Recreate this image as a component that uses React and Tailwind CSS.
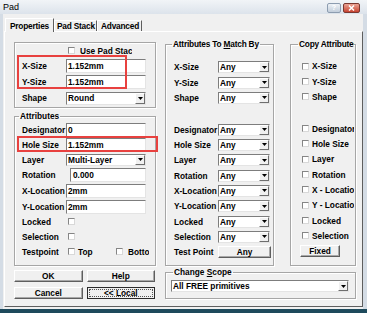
const group =
  "border border-[#a6a6a6] shadow-[inset_1px_1px_0_#ffffff,1px_1px_0_#ffffff]";

function Check({ className = "" }) {
  return (
    <span
      className={
        "block w-[7px] h-[7px] shrink-0 bg-white border border-[#858585] border-r-[#d8d8d8] border-b-[#d8d8d8] " +
        className
      }
    />
  );
}

function Field({ children, className = "" }) {
  return (
    <div
      className={
        "h-[14px] bg-white border border-[#7d7d7d] border-r-[#e4e4e4] border-b-[#e4e4e4] flex items-center pl-[1px] whitespace-nowrap " +
        className
      }
    >
      {children}
    </div>
  );
}

function Combo({ value, className = "" }) {
  return (
    <div
      className={
        "bg-white border border-[#7d7d7d] border-r-[#e4e4e4] border-b-[#e4e4e4] flex items-stretch " +
        className
      }
    >
      <span className="flex-1 flex items-center pl-[1px] overflow-hidden whitespace-nowrap">
        {value}
      </span>
      <span className="w-[10px] bg-[#f0f0f0] border border-white border-r-[#6e6e6e] border-b-[#6e6e6e] flex items-center justify-center">
        <svg width="5" height="3" viewBox="0 0 5 3">
          <path d="M0 0h5L2.5 3z" fill="#000" />
        </svg>
      </span>
    </div>
  );
}

function Btn({ children, className = "" }) {
  return (
    <div
      className={
        "h-[12px] bg-[#f0f0f0] border border-white border-r-[#5e5e5e] border-b-[#5e5e5e] shadow-[inset_-1px_-1px_0_#a8a8a8] flex items-center justify-center whitespace-nowrap " +
        className
      }
    >
      {children}
    </div>
  );
}

function Row({ label, h = "h-[15px]", children }) {
  return (
    <div className={"flex items-center " + h}>
      <span className="w-[44px] shrink-0 whitespace-nowrap">{label}</span>
      {children}
    </div>
  );
}

function CopyRow({ label, h = "h-[15px]" }) {
  return (
    <div className={"flex items-center " + h}>
      <Check />
      <span className="ml-[3px] w-[42px] overflow-hidden whitespace-nowrap">{label}</span>
    </div>
  );
}

export default function App() {
  return (
    <div className="w-[367px] h-[313px] overflow-hidden bg-[#d4dce5] border-b-[4px] border-b-[#1e4a5c] flex flex-col font-['Liberation_Sans',Arial,sans-serif] text-[8.3px] leading-[10px] text-black">
      {/* title bar */}
      <div className="h-[14px] shrink-0 flex items-center pl-[3px] pr-[7px] bg-gradient-to-b from-[#f1f4f7] to-[#dce3eb]">
        <span className="text-[9px] font-normal">Pad</span>
        <div className="ml-auto flex gap-[2px] self-start pt-[3px]">
          <div className="w-[14px] h-[10px] rounded-[2px] bg-gradient-to-b from-[#eef2f6] to-[#c2cedb] border border-[#8d9db0] flex items-center justify-center text-[7px] font-bold text-white">
            ?
          </div>
          <div className="w-[17px] h-[10px] rounded-[2px] bg-gradient-to-b from-[#eaa294] to-[#c6412f] border border-[#7a3830] flex items-center justify-center">
            <svg width="7" height="6" viewBox="0 0 7 6">
              <path d="M1 0.5l5 5M6 0.5l-5 5" stroke="#fff" strokeWidth="1.5" />
            </svg>
          </div>
        </div>
      </div>

      {/* client */}
      <div className="ml-[3px] w-[360px] flex-1 bg-[#f0f0f0] pt-[4px] font-bold">
        {/* tabs */}
        <div className="flex items-end h-[13px] pl-[2px] whitespace-nowrap">
          <div className="relative z-10 h-[14px] -mb-[1px] w-[49px] bg-[#f0f0f0] border border-b-0 border-white border-r-[#5e5e5e] flex items-start pt-[2px] pl-[4px] tracking-[-0.2px]">
            Properties
          </div>
          <div className="h-[11px] w-[43px] border border-b-0 border-white border-r-[#5e5e5e] flex items-center pl-[2px] tracking-[-0.2px]">
            Pad Stack
          </div>
          <div className="h-[11px] w-[45px] border border-b-0 border-white border-r-[#5e5e5e] flex items-center pl-[3px] tracking-[-0.2px]">
            Advanced
          </div>
        </div>

        {/* panel */}
        <div className="ml-[1px] w-[359px] h-[276px] border border-white border-r-[#5e5e5e] border-b-[#5e5e5e] pt-[7px] pl-[9px] flex gap-[9px]">
          {/* left column */}
          <div className="relative w-[142px] mt-[3px] flex flex-col">
            <fieldset className={group}>
              <div className="pl-[7px] pb-[1px]">
                <div className="h-[15px] flex items-center pl-[46px]">
                  <Check />
                  <span className="ml-[5px] w-[52px] overflow-hidden whitespace-nowrap">
                    Use Pad Stack
                  </span>
                </div>
                <Row label="X-Size" h="h-[16px]">
                  <Field className="w-[80px]">1.152mm</Field>
                </Row>
                <Row label="Y-Size" h="h-[16px]">
                  <Field className="w-[80px]">1.152mm</Field>
                </Row>
                <Row label="Shape" h="h-[16px]">
                  <Combo value="Round" className="w-[80px] h-[13px]" />
                </Row>
              </div>
            </fieldset>

            <fieldset className={"mt-[3px] " + group}>
              <legend className="ml-[4px] px-[1px] leading-[10px]">Attributes</legend>
              <div className="pl-[7px] pt-[1px] pb-[6px]">
                <Row label="Designator">
                  <Field className="w-[80px] h-[13px]">0</Field>
                </Row>
                <Row label="Hole Size">
                  <Field className="w-[80px] h-[13px]">1.152mm</Field>
                </Row>
                <Row label="Layer">
                  <Combo value="Multi-Layer" className="w-[80px] h-[12px]" />
                </Row>
                <Row label="Rotation" h="h-[16px]">
                  <Field className="ml-[4px] w-[76px] h-[13px] pl-[2px]">0.000</Field>
                </Row>
                <Row label="X-Location" h="h-[16px]">
                  <Field className="w-[80px] h-[12px]">2mm</Field>
                </Row>
                <Row label="Y-Location">
                  <Field className="w-[80px] h-[12px]">2mm</Field>
                </Row>
                <Row label="Locked">
                  <Check className="ml-[2px]" />
                </Row>
                <Row label="Selection">
                  <Check className="ml-[2px]" />
                </Row>
                <Row label="Testpoint">
                  <Check className="ml-[2px]" />
                  <span className="ml-[3px] w-[38px]">Top</span>
                  <Check />
                  <span className="ml-[5px] w-[21px] overflow-hidden whitespace-nowrap">
                    Bottom
                  </span>
                </Row>
              </div>
            </fieldset>

            <div className="mt-[4px] grid grid-cols-2 gap-x-[4px] gap-y-[5px] pr-[1px]">
              <Btn>OK</Btn>
              <Btn>Help</Btn>
              <Btn>Cancel</Btn>
              <div className="h-[12px] bg-[#f0f0f0] border border-[#2a2a2a] p-[1px]">
                <div className="h-full border border-dotted border-[#555] flex items-center justify-center">
                  &lt;&lt; Local
                </div>
              </div>
            </div>

            {/* highlight annotations */}
            <div className="absolute left-[3px] top-[13px] w-[110px] h-[34px] border-2 border-[#e8413f]" />
            <div className="absolute left-[3px] top-[94px] w-[141px] h-[16px] border-2 border-[#e8413f]" />
          </div>

          {/* right area */}
          <div className="w-[191px] flex flex-col">
            <div className="flex gap-[16px]">
              <fieldset className={"w-[109px] " + group}>
                <legend className="ml-[6px] px-[1px] leading-[10px] whitespace-nowrap tracking-[-0.2px]">
                  Attributes To <span className="underline">M</span>atch By
                </legend>
                <div className="pl-[8px] pt-[10px] pb-[6px]">
                  <Row label="X-Size" h="h-[16px]">
                    <Combo value="Any" className="w-[52px] h-[12px]" />
                  </Row>
                  <Row label="Y-Size">
                    <Combo value="Any" className="w-[52px] h-[12px]" />
                  </Row>
                  <Row label="Shape">
                    <Combo value="Any" className="w-[52px] h-[12px]" />
                  </Row>
                  <div className="h-[17px]" />
                  <Row label="Designator">
                    <Combo value="Any" className="w-[52px] h-[12px]" />
                  </Row>
                  <Row label="Hole Size">
                    <Combo value="Any" className="w-[52px] h-[12px]" />
                  </Row>
                  <Row label="Layer" h="h-[16px]">
                    <Combo value="Any" className="w-[52px] h-[12px]" />
                  </Row>
                  <Row label="Rotation">
                    <Combo value="Any" className="w-[52px] h-[12px]" />
                  </Row>
                  <Row label="X-Location">
                    <Combo value="Any" className="w-[52px] h-[12px]" />
                  </Row>
                  <Row label="Y-Location" h="h-[16px]">
                    <Combo value="Any" className="w-[52px] h-[12px]" />
                  </Row>
                  <Row label="Locked">
                    <Combo value="Any" className="w-[52px] h-[12px]" />
                  </Row>
                  <Row label="Selection">
                    <Combo value="Any" className="w-[52px] h-[12px]" />
                  </Row>
                  <Row label="Test Point">
                    <Btn className="w-[53px]">Any</Btn>
                  </Row>
                </div>
              </fieldset>

              <fieldset className={"w-[66px] " + group}>
                <legend className="ml-[7px] px-[1px] leading-[10px] max-w-[56px] overflow-hidden whitespace-nowrap tracking-[-0.2px]">
                  Copy Attributes
                </legend>
                <div className="pl-[11px] pt-[9px] pb-[7px]">
                  <CopyRow label="X-Size" h="h-[16px]" />
                  <CopyRow label="Y-Size" />
                  <CopyRow label="Shape" />
                  <div className="h-[17px]" />
                  <CopyRow label="Designator" />
                  <CopyRow label="Hole Size" />
                  <CopyRow label="Layer" h="h-[16px]" />
                  <CopyRow label="Rotation" />
                  <CopyRow label="X - Location" />
                  <CopyRow label="Y - Location" h="h-[16px]" />
                  <CopyRow label="Locked" />
                  <CopyRow label="Selection" />
                  <div className="h-[15px] flex items-center">
                    <Btn className="-ml-[2px] w-[40px]">Fixed</Btn>
                  </div>
                </div>
              </fieldset>
            </div>

            <fieldset className={"mt-[1px] " + group}>
              <legend className="ml-[7px] px-[1px] leading-[10px]">
                Change <span className="underline">S</span>cope
              </legend>
              <div className="pl-[5px] pt-[3px] pb-[6px]">
                <Combo value="All FREE primitives" className="w-[178px] h-[12px]" />
              </div>
            </fieldset>
          </div>
        </div>
      </div>
    </div>
  );
}
